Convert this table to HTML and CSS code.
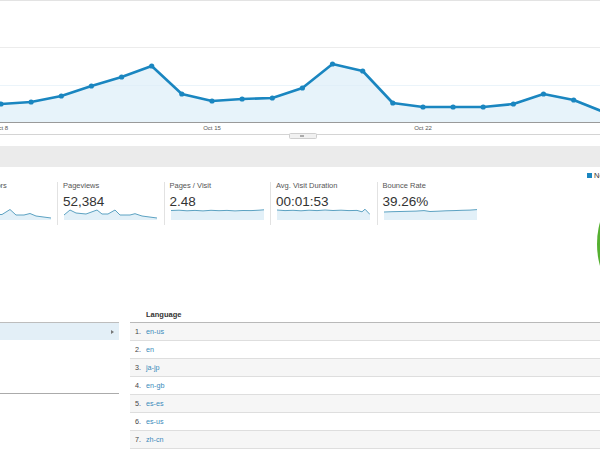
FILE: index.html
```html
<!DOCTYPE html>
<html lang="en">
<head>
<meta charset="utf-8">
<title>Audience Overview</title>
<link rel="stylesheet" href="styles.css">
</head>
<body>
<section class="trend">
  <svg class="trend-chart" width="600" height="146" viewBox="0 0 600 146">
    <line class="frame" x1="0" y1="0.5" x2="600" y2="0.5"/>
    <line class="grid" x1="0" y1="47.5" x2="600" y2="47.5"/>
    <polygon class="area" points="-29.1,106 1,104 31.1,102 61.3,96 91.4,86 121.6,77 151.7,66 181.8,94 212,101 242.1,99 272.3,98 302.4,88 332.5,64 362.7,71 392.8,103 423,107 453.1,107 483.2,107 513.4,104 543.5,94 573.7,100 603.8,112 603.8,122 -29.1,122"/>
    <line class="grid faint" x1="0" y1="85.5" x2="600" y2="85.5"/>
    <polyline class="line" points="-29.1,106 1,104 31.1,102 61.3,96 91.4,86 121.6,77 151.7,66 181.8,94 212,101 242.1,99 272.3,98 302.4,88 332.5,64 362.7,71 392.8,103 423,107 453.1,107 483.2,107 513.4,104 543.5,94 573.7,100 603.8,112"/>
    <g class="dots">
      <circle cx="1" cy="104" r="2.6"/><circle cx="31.1" cy="102" r="2.6"/><circle cx="61.3" cy="96" r="2.6"/>
      <circle cx="91.4" cy="86" r="2.6"/><circle cx="121.6" cy="77" r="2.6"/><circle cx="151.7" cy="66" r="2.6"/>
      <circle cx="181.8" cy="94" r="2.6"/><circle cx="212" cy="101" r="2.6"/><circle cx="242.1" cy="99" r="2.6"/>
      <circle cx="272.3" cy="98" r="2.6"/><circle cx="302.4" cy="88" r="2.6"/><circle cx="332.5" cy="64" r="2.6"/>
      <circle cx="362.7" cy="71" r="2.6"/><circle cx="392.8" cy="103" r="2.6"/><circle cx="423" cy="107" r="2.6"/>
      <circle cx="453.1" cy="107" r="2.6"/><circle cx="483.2" cy="107" r="2.6"/><circle cx="513.4" cy="104" r="2.6"/>
      <circle cx="543.5" cy="94" r="2.6"/><circle cx="573.7" cy="100" r="2.6"/><circle cx="603.8" cy="112" r="2.6"/>
    </g>
    <line class="axis" x1="0" y1="122.5" x2="600" y2="122.5"/>
    <text class="axis-label" x="1" y="130" text-anchor="middle">Oct 8</text>
    <text class="axis-label" x="212" y="130" text-anchor="middle">Oct 15</text>
    <text class="axis-label" x="423" y="130" text-anchor="middle">Oct 22</text>
    <line class="range" x1="0" y1="134.5" x2="600" y2="134.5"/>
    <rect class="handle" x="289.5" y="133.5" width="27" height="5" rx="1"/>
    <rect class="grip" x="300" y="135.5" width="4" height="1"/>
  </svg>
</section>

<div class="band"></div>

<section class="overview">
  <div class="cards">
    <div class="card">
      <div class="card-label">Unique Visitors</div>
      <div class="card-value">21,107</div>
      <svg class="spark" width="93" height="13" viewBox="0 0 93 13">
        <polygon class="spark-fill" points="0,8 6,3 12,6 22,6.5 33,3 38,6.5 44,6.5 52,1.5 58,7 66,7 72,5.5 78,8 93,10 93,12 0,12"/>
        <polyline class="spark-line" points="0,8 6,3 12,6 22,6.5 33,3 38,6.5 44,6.5 52,1.5 58,7 66,7 72,5.5 78,8 93,10"/>
      </svg>
    </div>
    <div class="card">
      <div class="card-label">Pageviews</div>
      <div class="card-value">52,384</div>
      <svg class="spark" width="93" height="13" viewBox="0 0 93 13">
        <polygon class="spark-fill" points="0,7 6,2 12,5 22,6 33,2 38,6 44,6 51,2 56,7 66,7 71,5.7 78,8 93,10 93,12 0,12"/>
        <polyline class="spark-line" points="0,7 6,2 12,5 22,6 33,2 38,6 44,6 51,2 56,7 66,7 71,5.7 78,8 93,10"/>
      </svg>
    </div>
    <div class="card">
      <div class="card-label">Pages / Visit</div>
      <div class="card-value">2.48</div>
      <svg class="spark" width="93" height="13" viewBox="0 0 93 13">
        <polygon class="spark-fill" points="0,2.5 8,2.2 16,2.8 24,2.4 32,2.9 40,2.3 48,2.7 56,2.4 64,2.9 72,2.5 80,2.6 88,2.2 93,1.8 93,12 0,12"/>
        <polyline class="spark-line" points="0,2.5 8,2.2 16,2.8 24,2.4 32,2.9 40,2.3 48,2.7 56,2.4 64,2.9 72,2.5 80,2.6 88,2.2 93,1.8"/>
      </svg>
    </div>
    <div class="card">
      <div class="card-label">Avg. Visit Duration</div>
      <div class="card-value">00:01:53</div>
      <svg class="spark" width="93" height="13" viewBox="0 0 93 13">
        <polygon class="spark-fill" points="0,2 8,2.6 16,2.3 24,2.8 32,2.2 40,2.6 48,2 56,2.5 64,2.2 72,2.6 80,2.4 85,3.8 88,1.2 93,6.5 93,12 0,12"/>
        <polyline class="spark-line" points="0,2 8,2.6 16,2.3 24,2.8 32,2.2 40,2.6 48,2 56,2.5 64,2.2 72,2.6 80,2.4 85,3.8 88,1.2 93,6.5"/>
      </svg>
    </div>
    <div class="card">
      <div class="card-label">Bounce Rate</div>
      <div class="card-value">39.26%</div>
      <svg class="spark" width="93" height="13" viewBox="0 0 93 13">
        <polygon class="spark-fill" points="0,4 8,3.7 16,3.5 24,3.3 32,3.1 40,2.6 46,3.5 54,3.2 62,2.8 70,2.6 78,2.3 86,2.1 93,1.6 93,12 0,12"/>
        <polyline class="spark-line" points="0,4 8,3.7 16,3.5 24,3.3 32,3.1 40,2.6 46,3.5 54,3.2 62,2.8 70,2.6 78,2.3 86,2.1 93,1.6"/>
      </svg>
    </div>
  </div>
  <div class="pie-col">
    <div class="legend"><span class="legend-swatch"></span><span>New Visitor</span></div>
    <svg class="pie" width="180" height="150" viewBox="0 0 180 150">
      <circle class="pie-returning" cx="92" cy="64" r="82"/>
    </svg>
  </div>
</section>

<section class="bottom">
  <div class="left-panel">
    <div class="active-row"><span class="arrow"></span></div>
  </div>
  <div class="lang-table">
    <div class="lang-head">Language</div>
    <ol class="lang-rows">
      <li class="lang-row"><span class="num">1.</span><a class="lang" href="#">en-us</a></li>
      <li class="lang-row"><span class="num">2.</span><a class="lang" href="#">en</a></li>
      <li class="lang-row"><span class="num">3.</span><a class="lang" href="#">ja-jp</a></li>
      <li class="lang-row"><span class="num">4.</span><a class="lang" href="#">en-gb</a></li>
      <li class="lang-row"><span class="num">5.</span><a class="lang" href="#">es-es</a></li>
      <li class="lang-row"><span class="num">6.</span><a class="lang" href="#">es-us</a></li>
      <li class="lang-row"><span class="num">7.</span><a class="lang" href="#">zh-cn</a></li>
    </ol>
  </div>
</section>
</body>
</html>
```

FILE: styles.css
```css
html, body {
  margin: 0;
  padding: 0;
}

body {
  width: 600px;
  height: 450px;
  overflow: hidden;
  background: #fff;
  color: #333;
  font-family: "Liberation Sans", Arial, sans-serif;
}

/* ---------- trend chart ---------- */
.trend-chart {
  display: block;
}

.frame { stroke: #e3e3e3; stroke-width: 1; }
.grid { stroke: #ececec; stroke-width: 1; }
.grid.faint { stroke: #deedf6; stroke-opacity: 0.6; }
.area { fill: #e7f3fa; }
.line {
  fill: none;
  stroke: #1a86c0;
  stroke-width: 2.6;
  stroke-linejoin: round;
}
.dots circle { fill: #1a86c0; }
.axis { stroke: #9a9a9a; stroke-width: 1; }
.axis-label {
  font-family: "Liberation Sans", Arial, sans-serif;
  font-size: 6px;
  fill: #555;
}
.range { stroke: #d4d4d4; stroke-width: 1; }
.handle { fill: #f1f1f1; stroke: #cfcfcf; stroke-width: 1; }
.grip { fill: #666; }

/* ---------- gray band ---------- */
.band {
  height: 21px;
  background: #ebebeb;
}

/* ---------- overview ---------- */
.overview {
  display: flex;
  height: 141px;
  overflow: hidden;
}

.cards {
  display: flex;
  flex: none;
  align-items: flex-start;
  margin-left: -49.5px;
  padding-top: 15px;
}

.card {
  flex: none;
  box-sizing: border-box;
  width: 106.5px;
  height: 43px;
  border-left: 1px solid #e2e2e2;
  padding-left: 5px;
}

.card-label {
  font-size: 7.5px;
  line-height: 8px;
  color: #555;
  white-space: nowrap;
}

.card-value {
  margin-top: 5px;
  font-size: 13.5px;
  line-height: 13px;
  color: #333;
  white-space: nowrap;
}

.spark {
  display: block;
  margin-left: 1px;
}

.spark-line {
  fill: none;
  stroke: #5ca2c2;
  stroke-width: 1;
  stroke-linejoin: round;
}

.spark-fill { fill: #e2f0f8; }

.pie-col {
  flex: none;
  width: 13px;
  margin-left: auto;
  padding-top: 4px;
}

.legend {
  display: flex;
  align-items: center;
  gap: 2px;
  font-size: 7.5px;
  line-height: 9px;
  color: #333;
  white-space: nowrap;
}

.legend-swatch {
  flex: none;
  width: 5px;
  height: 5px;
  background: #1a86c0;
}

.pie {
  display: block;
}

.pie-returning { fill: #55b030; }

/* ---------- bottom: language table ---------- */
.bottom {
  display: flex;
  gap: 11px;
}

.left-panel {
  flex: none;
  width: 119px;
  height: 70px;
  margin-top: 14px;
  border-top: 1px solid #bdbdbd;
  border-bottom: 1px solid #ababab;
}

.active-row {
  display: flex;
  align-items: center;
  justify-content: flex-end;
  height: 17px;
  padding-right: 5px;
  background: #e3eff7;
}

.arrow {
  width: 0;
  height: 0;
  border-left: 3px solid #777;
  border-top: 2.5px solid transparent;
  border-bottom: 2.5px solid transparent;
}

.lang-table {
  flex: 1;
}

.lang-head {
  height: 14px;
  padding-left: 16px;
  border-bottom: 1px solid #b9b9b9;
  font-size: 7.5px;
  line-height: 14px;
  font-weight: bold;
  color: #333;
}

.lang-rows {
  margin: 0;
  padding: 0;
  list-style: none;
}

.lang-row {
  display: flex;
  align-items: center;
  height: 17px;
  border-bottom: 1px solid #dedede;
  font-size: 7.2px;
  background: #fff;
}

.lang-row:nth-child(odd) {
  background: #f6f6f6;
}

.num {
  width: 11px;
  margin-left: 5px;
  color: #444;
}

.lang {
  color: #3a8abb;
  text-decoration: none;
}
```
